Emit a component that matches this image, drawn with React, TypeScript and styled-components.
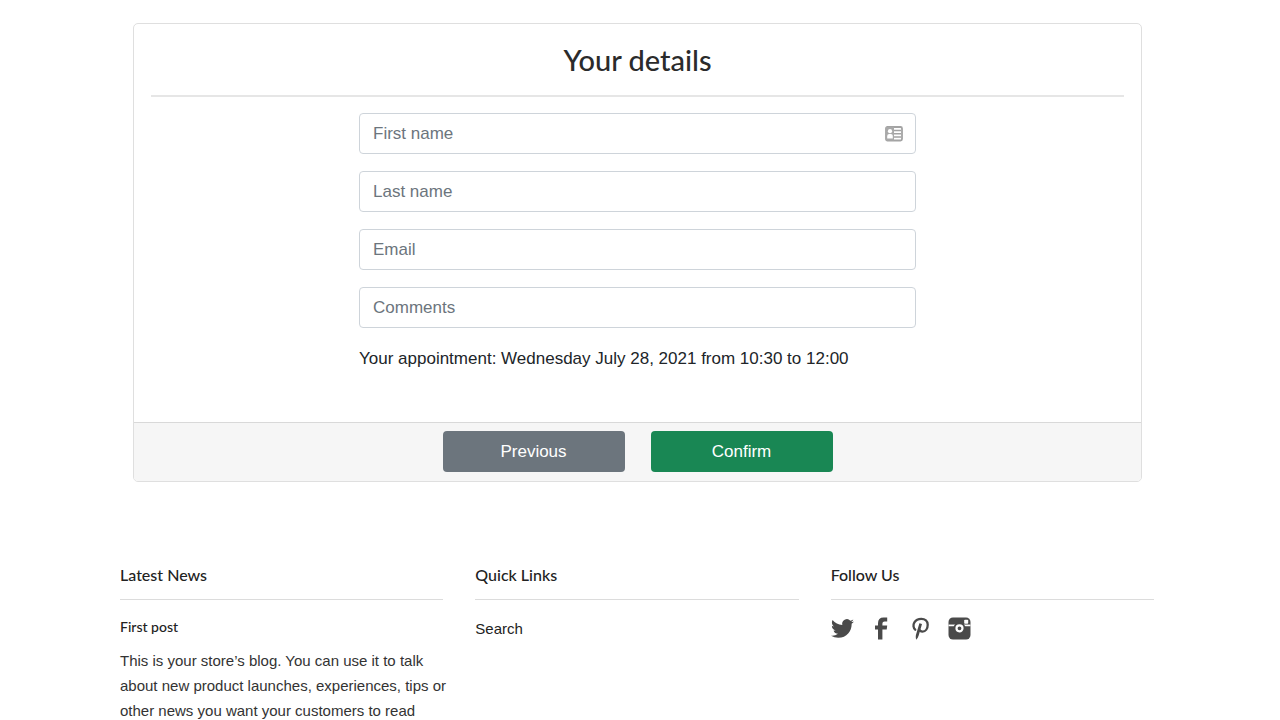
import React from "react";
import styled, { createGlobalStyle } from "styled-components";

const GlobalStyle = createGlobalStyle`
  *, *::before, *::after { box-sizing: border-box; }
  body {
    margin: 0;
    background: #fff;
    color: #212529;
    font-family: "Liberation Sans", Arial, sans-serif;
    font-size: 17px;
    line-height: 26px;
  }
`;

const Page = styled.div`
  padding: 23px 126px 0 120px;
`;

const Card = styled.form`
  margin: 0 12px 0 13px;
  border: 1px solid #dfdfdf;
  border-radius: 5px;
  overflow: hidden;
`;

const CardBody = styled.div`
  padding: 17px 17px 49px;
`;

const Title = styled.h1`
  margin: 0 0 16px;
  padding-bottom: 16px;
  border-bottom: 2px solid #e6e6e6;
  color: #2b2b2b;
  font-family: Lato, sans-serif;
  font-size: 29px;
  font-weight: 500;
  line-height: 38px;
  text-align: center;
`;

const Fields = styled.div`
  display: flex;
  flex-direction: column;
  gap: 17px;
  width: 100%;
  max-width: 557px;
  margin: 0 auto;
`;

const Field = styled.div`
  display: flex;
  align-items: center;
  height: 41px;
  padding: 0 12px 0 13px;
  border: 1px solid #ced4da;
  border-radius: 4px;
`;

const TextInput = styled.input`
  flex: 1;
  min-width: 0;
  padding: 0;
  border: 0;
  outline: 0;
  background: transparent;
  color: #212529;
  font: inherit;

  &::placeholder {
    color: #6c757d;
    opacity: 1;
  }
`;

const Summary = styled.p`
  margin: 0;
  line-height: 28px;
`;

const CardFooter = styled.div`
  display: flex;
  justify-content: center;
  gap: 26px;
  padding: 8px 17px 9px;
  border-top: 1px solid #d9d9d9;
  background: #f6f6f6;
`;

const Button = styled.button<{ $color: string }>`
  width: 182px;
  height: 41px;
  padding: 1px 0 0;
  border: 0;
  border-radius: 4px;
  background: ${(p) => p.$color};
  color: #fff;
  font: inherit;
  cursor: pointer;
`;

const SiteFooter = styled.footer`
  display: grid;
  grid-template-columns: repeat(3, 1fr);
  gap: 32px;
  margin-top: 80px;
  color: #333;
  font-size: 15px;
  line-height: 25px;
`;

const ColumnTitle = styled.h2`
  margin: 0 0 16px;
  padding-bottom: 11px;
  border-bottom: 1px solid #dcdcdc;
  color: #222;
  font-family: Lato, sans-serif;
  font-size: 16px;
  font-weight: 500;
  line-height: 26px;
`;

const PostTitle = styled.h3`
  margin: 0 0 10px;
  font-family: Lato, sans-serif;
  font-size: 14px;
  font-weight: 500;
  line-height: 22px;
`;

const PostText = styled.p`
  margin: 0 -8px 0 0;
`;

const FooterLink = styled.a`
  color: #222;
  text-decoration: none;
`;

const Social = styled.nav`
  display: flex;
  gap: 16px;
  padding-top: 1px;
`;

const SocialLink = styled.a`
  display: flex;
  justify-content: center;
  width: 23px;
  color: #4a4a4a;
`;

const ContactCardIcon = () => (
  <svg width="18" height="16" viewBox="0 0 18 16" aria-hidden="true">
    <rect x="1" y="1" width="16" height="13.5" rx="1.5" fill="#fff" stroke="#a3a3a3" strokeWidth="1.8" />
    <path d="M1 1h8v13.5H1z" fill="#a9a9a9" />
    <circle cx="5" cy="5.200" r="2.100" fill="#fff" />
    <path d="M2.200 12.500V10q0-2 2-2h1.600q2 0 2 2v2.500z" fill="#fff" />
    <path d="M9 4.600h7M9 7.800h7M9 11h7" stroke="#a3a3a3" strokeWidth="1.500" />
  </svg>
);

const TwitterIcon = () => (
  <svg width="23" height="23" viewBox="0 0 24 24" fill="currentColor" aria-hidden="true">
    <path d="M23.950 4.570a10 10 0 0 1-2.820.770 4.960 4.960 0 0 0 2.160-2.720 9.900 9.900 0 0 1-3.120 1.190 4.920 4.920 0 0 0-8.380 4.480C7.690 8.090 4.070 6.130 1.640 3.160a4.820 4.820 0 0 0-.670 2.480c0 1.710.870 3.210 2.190 4.100a4.900 4.900 0 0 1-2.230-.620v.060a4.920 4.920 0 0 0 3.950 4.830 5 5 0 0 1-2.210.090 4.940 4.940 0 0 0 4.600 3.420A9.870 9.870 0 0 1 0 19.540a13.990 13.990 0 0 0 7.550 2.210c9.050 0 14-7.500 14-13.980 0-.210 0-.420-.020-.630a9.940 9.940 0 0 0 2.420-2.570z" />
  </svg>
);

const FacebookIcon = () => (
  <svg width="23" height="23" viewBox="0 0 23 23" fill="currentColor" aria-hidden="true">
    <path d="M8 22.500V12.400H5V8.600h3V6.200Q8 .6 13.600.6h3.600v3.800h-2.600q-2.200 0-2.200 2v2.200h4.800l-.5 3.800h-4.300v10.100z" />
  </svg>
);

const PinterestIcon = () => (
  <svg width="23" height="23" viewBox="0 0 23 23" fill="none" stroke="currentColor" aria-hidden="true">
    <path
      strokeWidth="2.300"
      strokeLinecap="round"
      d="M6.200 12.700C4.400 11.200 3.800 7.900 5.400 5.300C7 2.700 9.800 1.800 12.300 1.800C16 1.800 18.700 4.200 18.700 7.700C18.700 11.700 16.600 14.600 13.500 14.600C11.900 14.600 10.700 13.800 10.300 12.700"
    />
    <path fill="currentColor" stroke="none" d="M10.400 6.300l2.600.6l-3.300 11.700q-.6 2.300-2.600 4.100q-.7-2.500-.2-4.800z" />
  </svg>
);

const CameraIcon = () => (
  <svg width="23" height="23" viewBox="0 0 23 23" aria-hidden="true">
    <rect x=".5" y=".5" width="22" height="22" rx="4.500" fill="currentColor" />
    <path d="M.5 8.400h22" stroke="#fff" strokeWidth="1.700" />
    <rect x="16.200" y="2.800" width="4" height="4" rx=".8" fill="#fff" />
    <circle cx="11.500" cy="11.300" r="6" fill="currentColor" />
    <circle cx="11.500" cy="11.300" r="3" fill="none" stroke="#fff" strokeWidth="2.200" />
  </svg>
);

const fields = [
  { name: "firstName", label: "First name", type: "text", icon: true },
  { name: "lastName", label: "Last name", type: "text" },
  { name: "email", label: "Email", type: "email" },
  { name: "comments", label: "Comments", type: "text" },
];

export default function App() {
  return (
    <>
      <GlobalStyle />
      <Page>
        <Card onSubmit={(e) => e.preventDefault()}>
          <CardBody>
            <Title>Your details</Title>
            <Fields>
              {fields.map((f) => (
                <Field key={f.name}>
                  <TextInput name={f.name} type={f.type} placeholder={f.label} aria-label={f.label} />
                  {f.icon && <ContactCardIcon />}
                </Field>
              ))}
              <Summary>Your appointment: Wednesday July 28, 2021 from 10:30 to 12:00</Summary>
            </Fields>
          </CardBody>
          <CardFooter>
            <Button type="button" $color="#6c757d">Previous</Button>
            <Button type="submit" $color="#198754">Confirm</Button>
          </CardFooter>
        </Card>
        <SiteFooter>
          <section>
            <ColumnTitle>Latest News</ColumnTitle>
            <PostTitle><FooterLink href="#post">First post</FooterLink></PostTitle>
            <PostText>
              This is your store’s blog. You can use it to talk about new product launches,
              experiences, tips or other news you want your customers to read
            </PostText>
          </section>
          <section>
            <ColumnTitle>Quick Links</ColumnTitle>
            <FooterLink href="#search">Search</FooterLink>
          </section>
          <section>
            <ColumnTitle>Follow Us</ColumnTitle>
            <Social aria-label="Follow Us">
              <SocialLink href="#twitter" aria-label="Twitter"><TwitterIcon /></SocialLink>
              <SocialLink href="#facebook" aria-label="Facebook"><FacebookIcon /></SocialLink>
              <SocialLink href="#pinterest" aria-label="Pinterest"><PinterestIcon /></SocialLink>
              <SocialLink href="#instagram" aria-label="Instagram"><CameraIcon /></SocialLink>
            </Social>
          </section>
        </SiteFooter>
      </Page>
    </>
  );
}
